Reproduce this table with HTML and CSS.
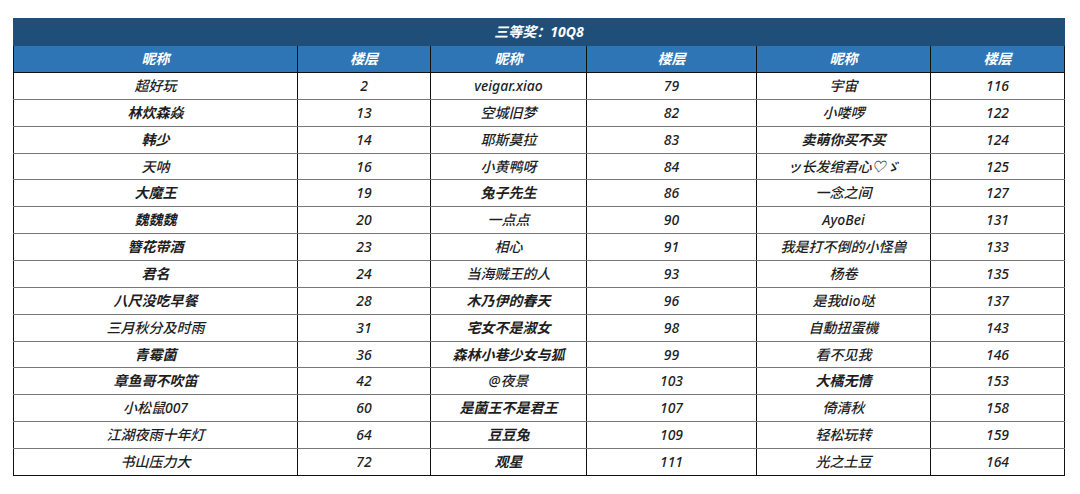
FILE: index.html
```html
<!DOCTYPE html>
<html lang="zh">
<head>
<meta charset="utf-8">
<link rel="stylesheet" href="styles.css">
</head>
<body>
<div class="wrap">
<table class="prize">
<colgroup>
<col class="c1"><col class="c2"><col class="c3"><col class="c4"><col class="c5"><col class="c6">
</colgroup>
<thead>
<tr class="title"><th colspan="6">三等奖：10Q8</th></tr>
<tr class="head"><th>昵称</th><th>楼层</th><th>昵称</th><th>楼层</th><th>昵称</th><th>楼层</th></tr>
</thead>
<tbody>
<tr><td>超好玩</td><td>2</td><td>veigar.xiao</td><td>79</td><td>宇宙</td><td>116</td></tr>
<tr><td class="b">林炊森焱</td><td>13</td><td>空城旧梦</td><td>82</td><td>小喽啰</td><td>122</td></tr>
<tr><td class="b">韩少</td><td>14</td><td>耶斯莫拉</td><td>83</td><td class="b">卖萌你买不买</td><td>124</td></tr>
<tr><td>天呐</td><td>16</td><td>小黄鸭呀</td><td>84</td><td>ッ长发绾君心♡ゞ</td><td>125</td></tr>
<tr><td class="b">大魔王</td><td>19</td><td class="b">兔子先生</td><td>86</td><td>一念之间</td><td>127</td></tr>
<tr><td class="b">魏魏魏</td><td>20</td><td>一点点</td><td>90</td><td>AyoBei</td><td>131</td></tr>
<tr><td class="b">簪花带酒</td><td>23</td><td>相心</td><td>91</td><td>我是打不倒的小怪兽</td><td>133</td></tr>
<tr><td class="b">君名</td><td>24</td><td>当海贼王的人</td><td>93</td><td>杨卷</td><td>135</td></tr>
<tr><td class="b">八尺没吃早餐</td><td>28</td><td class="b">木乃伊的春天</td><td>96</td><td>是我dio哒</td><td>137</td></tr>
<tr><td>三月秋分及时雨</td><td>31</td><td class="b">宅女不是淑女</td><td>98</td><td>自動扭蛋機</td><td>143</td></tr>
<tr><td class="b">青霉菌</td><td>36</td><td class="b">森林小巷少女与狐</td><td>99</td><td>看不见我</td><td>146</td></tr>
<tr><td class="b">章鱼哥不吹笛</td><td>42</td><td>@夜景</td><td>103</td><td class="b">大橘无情</td><td>153</td></tr>
<tr><td>小松鼠007</td><td>60</td><td class="b">是菌王不是君王</td><td>107</td><td>倚清秋</td><td>158</td></tr>
<tr><td>江湖夜雨十年灯</td><td>64</td><td class="b">豆豆兔</td><td>109</td><td>轻松玩转</td><td>159</td></tr>
<tr><td>书山压力大</td><td>72</td><td class="b">观星</td><td>111</td><td>光之土豆</td><td>164</td></tr>
</tbody>
</table>
</div>
</body>
</html>
```

FILE: styles.css
```css
html, body {
  margin: 0;
  padding: 0;
  background: #ffffff;
}
.wrap {
  padding: 18px 16px 0 13px;
}
.prize {
  width: 1051px;
  border-collapse: collapse;
  table-layout: fixed;
  font-family: "Noto Sans", "Noto Sans CJK SC", sans-serif;
  font-style: italic;
  font-size: 14px;
  color: #1e1e1e;
}
.c1 { width: 284px; }
.c2 { width: 133px; }
.c3 { width: 156px; }
.c4 { width: 170px; }
.c5 { width: 174px; }
.c6 { width: 134px; }
.prize th, .prize td {
  padding: 0;
  text-align: center;
  vertical-align: middle;
  line-height: 16px;
  white-space: nowrap;
}
.prize th {
  height: 26px;
}
.prize td {
  height: 25.87px;
  border-left: 1px solid #111;
  border-right: 1px solid #111;
  border-top: 1px solid #777;
  border-bottom: 1px solid #777;
  font-weight: 500;
}
.prize td.b {
  font-weight: 700;
}
.prize tbody tr:last-child td {
  border-bottom: 1px solid #111;
}
.title th {
  background: #1f4e79;
  color: #ffffff;
  font-weight: 700;
  border: 1px solid #1f4e79;
}
.head th {
  background: #2e75b6;
  color: #ffffff;
  font-weight: 700;
  border: 1px solid #111;
  border-top-color: #1f4e79;
}
```
